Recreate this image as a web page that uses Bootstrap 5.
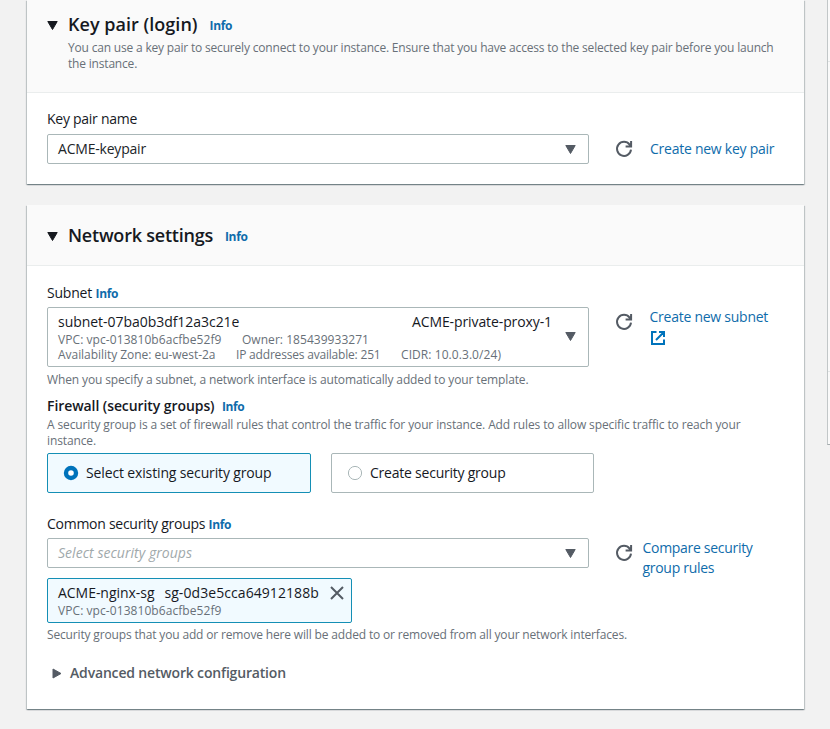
<!DOCTYPE html>
<html lang="en">
<head>
<meta charset="utf-8">
<meta name="viewport" content="width=device-width, initial-scale=1">
<title>Launch template</title>
<link href="https://cdn.jsdelivr.net/npm/bootstrap@5.3.0/dist/css/bootstrap.min.css" rel="stylesheet">
<style>
body{background:#f2f2f2;color:#16191f;font-family:"Open Sans","Noto Sans",sans-serif;font-size:14px;line-height:20px;letter-spacing:-.2px;height:729px;overflow:hidden}
a{color:#0f6cab;text-decoration:none}
.main-col{width:777px;margin-left:27px}
.panel{border:0;border-radius:0;background:#fff;box-shadow:0 1px 1px 0 rgba(0,28,36,.3),1px 1px 1px 0 rgba(0,28,36,.17),-1px 1px 1px 0 rgba(0,28,36,.17)}
.panel-keypair{height:184px}
.panel-network{height:504px;margin-top:21px}
.panel-head{background:#fafafa;border-bottom:1px solid #eaeded;padding:0 20px;border-radius:0!important}
.panel-keypair .panel-head{height:93px;padding-top:13px}
.panel-network .panel-head{height:61px;padding-top:19px}
.panel-body{padding:0 20px}
.panel-keypair .panel-body{padding-top:16px}
.panel-network .panel-body{padding-top:17px}
.title{font-size:18px;font-weight:600;line-height:22px;margin:0;letter-spacing:.03px}
.title-net{letter-spacing:-.224px}
.caret{width:11px;height:9px;margin:2px 10px 0 0;flex:none}
.info{font-size:12px;font-weight:700;line-height:16px;letter-spacing:-.36px}
.hint{font-size:12px;line-height:16px;color:#687078;letter-spacing:-.157px;margin:0}
.hint-key{letter-spacing:-.186px;margin:5px 0 0 21px}
.hint-subnet{letter-spacing:-.129px;margin-top:5px}
.hint-fw{letter-spacing:-.119px;margin-top:1px}
.picker{width:542px;height:30px;flex:none;border:1px solid #aab7b8;border-radius:2px;background:#fff;padding:0 12px 0 10px;color:#545b64}
.picker-tall{height:60px;padding-top:4px;color:#16191f}
.picker-row{margin-top:5px}
.picker svg,.picker-arrow{width:11px;height:9px;flex:none;color:#545b64}
.picker-arrow{margin-bottom:5px}
.subnet-name{padding-right:13px}
.reload{width:18px;height:18px;margin-left:26px;flex:none}
.reload-top{margin-top:6px}
.side-link{margin-left:17px;letter-spacing:-.25px}
.side-subnet{width:125px;margin-left:16.5px}
.side-subnet svg{margin-top:3px}
.groups-row{height:30px}
.side-compare{width:125px;margin-left:9.5px;letter-spacing:-.3px}
.meta{font-size:12px;line-height:15px;color:#687078;letter-spacing:.04px}
.meta-col{margin-right:20.5px}
.ls-a{letter-spacing:-.04px}
.ls-b{letter-spacing:-.193px}
.ls-c{letter-spacing:.07px}
.ls-d{letter-spacing:-.1px}
.ls-e{letter-spacing:-.27px}
.fw-title{font-weight:600;letter-spacing:-.075px}
.tiles{gap:20px}
.tile{width:263px;height:40px;border:1px solid #aab7b8;border-radius:2px;padding-left:15px;letter-spacing:-.228px}
.tile-on{width:264px;border-color:#148fb5;background:#f1faff;letter-spacing:-.138px}
.tile svg{width:16px;height:16px;margin-right:7px}
.groups-label{margin-top:21px}
.placeholder-text{color:#9fa9ab;font-style:italic;letter-spacing:.037px}
.token{width:305px;height:45px;border:1px solid #148fb5;border-radius:2px;background:#f1faff;padding:4px 7px 0 10px;margin-top:10px}
.token-name{margin-right:10px}
.token svg{margin-top:3px}
.advanced{font-weight:600;color:#545b64;letter-spacing:-.17px;margin-top:20px;padding-left:5px}
.next-col{top:0;left:827px;width:3px;height:445px;background:#fafafa;border-left:1px solid #c2c7c8;border-bottom:1px solid #a5acae}
.next-col div{height:62px;border-bottom:1px solid #e3e6e6}
.next-col div+div{height:310px}
</style>
<script src="https://cdn.jsdelivr.net/npm/bootstrap@5.3.0/dist/js/bootstrap.bundle.min.js"></script>
</head>
<body>
<svg class="d-none">
  <symbol id="down" viewBox="0 0 11 9"><path d="M.8.5h9.4L5.5 8.5z" fill="currentColor" stroke="currentColor" stroke-linejoin="round"/></symbol>
  <symbol id="reload" viewBox="0 0 18 18"><path d="M16 9.6A7 7 0 1 1 14.6 4.6L15.8 6M16.1 1v5.6H10.6" fill="none" stroke="#545b64" stroke-width="2"/></symbol>
</svg>
<main class="main-col">
  <section class="card panel panel-keypair">
    <div class="card-header panel-head">
      <div class="d-flex align-items-center">
        <svg class="caret"><use href="#down"/></svg>
        <h2 class="title">Key pair (login)</h2>
        <a href="#" class="info ms-2 ps-1 pt-1">Info</a>
      </div>
      <p class="hint hint-key"><span class="d-block text-nowrap">You can use a key pair to securely connect to your instance. Ensure that you have access to the selected key pair before you launch</span>the instance.</p>
    </div>
    <div class="panel-body">
      <div class="ls-e">Key pair name</div>
      <div class="d-flex align-items-center picker-row">
        <div class="picker d-flex align-items-center justify-content-between"><span class="text-dark">ACME-keypair</span><svg><use href="#down"/></svg></div>
        <svg class="reload"><use href="#reload"/></svg>
        <a href="#" class="side-link">Create new key pair</a>
      </div>
    </div>
  </section>

  <section class="card panel panel-network">
    <div class="card-header panel-head">
      <div class="d-flex align-items-center">
        <svg class="caret"><use href="#down"/></svg>
        <h2 class="title title-net">Network settings</h2>
        <a href="#" class="info ms-2 ps-1 pt-1">Info</a>
      </div>
    </div>
    <div class="panel-body">
      <div>Subnet <a href="#" class="info">Info</a></div>
      <div class="d-flex mt-1">
        <div class="picker picker-tall d-flex">
          <div class="flex-grow-1">
            <div class="d-flex justify-content-between subnet-name"><span class="ls-a">subnet-07ba0b3df12a3c21e</span><span class="ls-d">ACME-private-proxy-1</span></div>
            <div class="meta d-flex"><span class="meta-col ls-c">VPC: vpc-013810b6acfbe52f9</span><span>Owner: 185439933271</span></div>
            <div class="meta d-flex"><span class="meta-col ls-a">Availability Zone: eu-west-2a</span><span class="meta-col ls-b">IP addresses available: 251</span><span class="ls-c">CIDR: 10.0.3.0/24)</span></div>
          </div>
          <div class="picker-arrow d-flex align-self-center"><svg><use href="#down"/></svg></div>
        </div>
        <svg class="reload reload-top"><use href="#reload"/></svg>
        <a href="#" class="side-link side-subnet">Create new subnet
          <svg class="d-block" width="16" height="16" viewBox="0 0 16 16"><path d="M6.5 2H2v12h12V9.5M9 2h5v5M14 2L6 10" fill="none" stroke="#0073bb" stroke-width="2"/></svg></a>
      </div>
      <p class="hint hint-subnet">When you specify a subnet, a network interface is automatically added to your template.</p>
      <div class="mt-2"><span class="fw-title">Firewall (security groups)</span> <a href="#" class="info ms-1">Info</a></div>
      <p class="hint hint-fw"><span class="d-block text-nowrap">A security group is a set of firewall rules that control the traffic for your instance. Add rules to allow specific traffic to reach your</span>instance.</p>
      <div class="d-flex mt-1 tiles">
        <label class="tile tile-on d-flex align-items-center"><svg viewBox="0 0 16 16"><circle cx="8" cy="8" r="5" fill="#fff" stroke="#0073bb" stroke-width="4.4"/></svg>Select existing security group</label>
        <label class="tile d-flex align-items-center"><svg viewBox="0 0 16 16"><circle cx="8" cy="8" r="6.6" fill="#fff" stroke="#aab7b8"/></svg>Create security group</label>
      </div>
      <div class="groups-label ls-e">Common security groups <a href="#" class="info">Info</a></div>
      <div class="d-flex mt-1 groups-row">
        <div class="picker d-flex align-items-center justify-content-between"><span class="placeholder-text">Select security groups</span><svg><use href="#down"/></svg></div>
        <svg class="reload reload-top"><use href="#reload"/></svg>
        <a href="#" class="side-link side-compare">Compare security<br>group rules</a>
      </div>
      <div class="token d-flex justify-content-between">
        <div>
          <div><span class="ls-a token-name">ACME-nginx-sg</span><span class="ls-c">sg-0d3e5cca64912188b</span></div>
          <div class="meta ls-c">VPC: vpc-013810b6acfbe52f9</div>
        </div>
        <svg width="14" height="14" viewBox="0 0 14 14"><path d="M1 1l12 12M13 1L1 13" stroke="#545b64" stroke-width="2"/></svg>
      </div>
      <p class="hint mt-1">Security groups that you add or remove here will be added to or removed from all your network interfaces.</p>
      <div class="advanced d-flex align-items-center"><svg width="10" height="11" viewBox="0 0 10 11" class="me-2"><path d="M1 1v9L9 5.5z" fill="currentColor" stroke="currentColor" stroke-linejoin="round"/></svg>Advanced network configuration</div>
    </div>
  </section>
</main>
<div class="next-col position-absolute"><div></div><div></div></div>
</body>
</html>
